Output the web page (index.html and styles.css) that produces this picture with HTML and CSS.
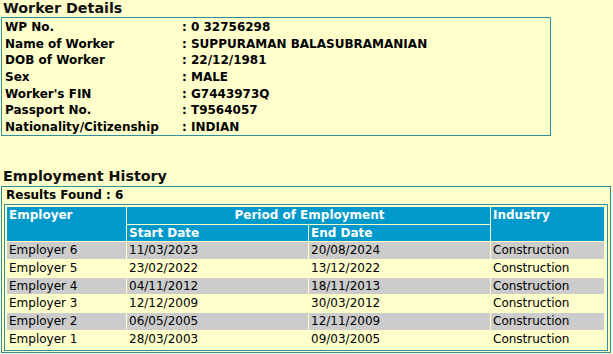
FILE: index.html
```html
<!DOCTYPE html>
<html>
<head>
<meta charset="utf-8">
<link rel="stylesheet" href="styles.css">
</head>
<body>
<h2 class="title">Worker Details</h2>
<div class="details">
  <div class="lbl">WP No.</div><div class="val">: 0 32756298</div>
  <div class="lbl">Name of Worker</div><div class="val">: SUPPURAMAN BALASUBRAMANIAN</div>
  <div class="lbl">DOB of Worker</div><div class="val">: 22/12/1981</div>
  <div class="lbl">Sex</div><div class="val">: MALE</div>
  <div class="lbl">Worker's FIN</div><div class="val">: G7443973Q</div>
  <div class="lbl">Passport No.</div><div class="val">: T9564057</div>
  <div class="lbl">Nationality/Citizenship</div><div class="val">: INDIAN</div>
</div>

<h2 class="title title-history">Employment History</h2>
<div class="history">
  <div class="results">Results Found : 6</div>
  <div class="emp" role="table">
    <div class="th th-emp" role="columnheader">Employer</div>
    <div class="th th-period" role="columnheader">Period of Employment</div>
    <div class="th th-ind" role="columnheader">Industry</div>
    <div class="th th-start" role="columnheader">Start Date</div>
    <div class="th th-end" role="columnheader">End Date</div>

    <div class="td odd">Employer 6</div><div class="td odd">11/03/2023</div><div class="td odd">20/08/2024</div><div class="td odd">Construction</div>
    <div class="td even">Employer 5</div><div class="td even">23/02/2022</div><div class="td even">13/12/2022</div><div class="td even">Construction</div>
    <div class="td odd">Employer 4</div><div class="td odd">04/11/2012</div><div class="td odd">18/11/2013</div><div class="td odd">Construction</div>
    <div class="td even">Employer 3</div><div class="td even">12/12/2009</div><div class="td even">30/03/2012</div><div class="td even">Construction</div>
    <div class="td odd">Employer 2</div><div class="td odd">06/05/2005</div><div class="td odd">12/11/2009</div><div class="td odd">Construction</div>
    <div class="td even">Employer 1</div><div class="td even">28/03/2003</div><div class="td even">09/03/2005</div><div class="td even">Construction</div>
  </div>
</div>
</body>
</html>
```

FILE: styles.css
```css
html, body {
  margin: 0;
  padding: 0;
  background: #FFFFCC;
}
body {
  font-family: "DejaVu Sans", Verdana, sans-serif;
  font-size: 12px;
  color: #000;
}
.title {
  margin: 0;
  padding-left: 3px;
  font-size: 14.3px;
  font-weight: bold;
  line-height: 17px;
  height: 17px;
  color: #111;
}
.title-history {
  margin-top: 32px;
  height: 18px;
}
.details {
  box-sizing: border-box;
  margin-left: 1px;
  width: 550px;
  height: 119px;
  border: 1px solid #2f8f9f;
  padding: 1px 0 0 3px;
  display: grid;
  grid-template-columns: 177px 1fr;
  grid-auto-rows: 16.7px;
  font-weight: bold;
  line-height: 16.7px;
  white-space: nowrap;
}
.history {
  box-sizing: border-box;
  margin-left: 1px;
  width: 610px;
  border: 1px solid #2f8f9f;
  padding: 0 2px 1px 2px;
}
.results {
  font-weight: bold;
  line-height: 17px;
  height: 17px;
  padding-left: 2px;
}
.emp {
  box-sizing: border-box;
  width: 604px;
  border: 1px solid #2f8f9f;
  padding: 2px;
  display: grid;
  grid-template-columns: 119px 181px 181px 113px;
  grid-template-rows: 17px 16px repeat(6, 16.8px);
  gap: 1px;
}
.th {
  background: #0099CC;
  color: #fff;
  font-weight: bold;
  line-height: 17px;
  padding-left: 2px;
  white-space: nowrap;
}
.th-emp { grid-column: 1; grid-row: 1 / span 2; }
.th-period { grid-column: 2 / span 2; grid-row: 1; text-align: center; }
.th-ind { grid-column: 4; grid-row: 1 / span 2; }
.th-start { grid-column: 2; grid-row: 2; line-height: 16px; }
.th-end { grid-column: 3; grid-row: 2; line-height: 16px; }
.td {
  line-height: 15.8px;
  padding: 1px 0 0 2px;
  white-space: nowrap;
}
.td.odd { background: #CCCCCC; }
.td.even { background: #FFFFCC; }
```
